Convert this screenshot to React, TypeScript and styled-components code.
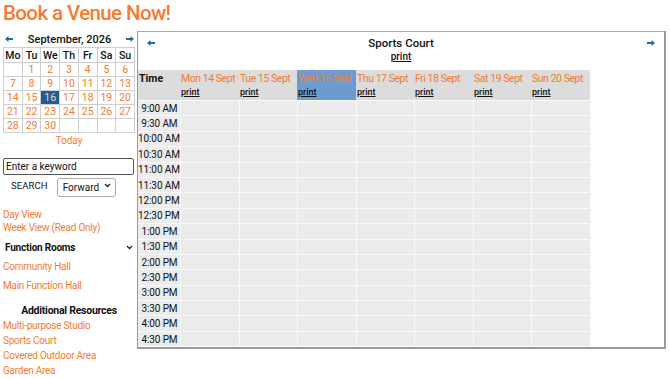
import React from "react";
import styled, { createGlobalStyle } from "styled-components";

const ORANGE = "#f47b30";
const BLUE = "#1a6db3";

const GlobalStyle = createGlobalStyle`
  body {
    margin: 0;
    font-family: Roboto, "Liberation Sans", Arial, sans-serif;
    color: #111;
    background: #fff;
  }
`;

const Page = styled.div`
  padding: 0 4px 0 3px;
`;

const Title = styled.h1`
  margin: 0;
  height: 31px;
  font-size: 20.5px;
  line-height: 27px;
  font-weight: 500;
  letter-spacing: -0.6px;
  color: ${ORANGE};
`;

const Layout = styled.div`
  display: flex;
  align-items: flex-start;
  gap: 2px;
`;

const Sidebar = styled.div`
  width: 132px;
  display: flex;
  flex-direction: column;
`;

const CalNav = styled.div`
  display: flex;
  align-items: center;
  justify-content: space-between;
  height: 16px;
  padding: 0 1px 0 2px;
  font-size: 11px;
  font-weight: 500;
`;

const CalTable = styled.table`
  border-collapse: collapse;
  width: 132px;
  table-layout: fixed;
  border: 1px solid #9a9a9a;
  font-size: 10.5px;
`;

const CalHead = styled.th`
  height: 14px;
  padding: 0;
  font-weight: 500;
  text-align: center;
  border: 1px solid #cfcfcf;
`;

const CalCell = styled.td<{ $active?: boolean }>`
  height: 13px;
  padding: 0;
  text-align: center;
  color: ${(p) => (p.$active ? "#fcd2b4" : ORANGE)};
  background: ${(p) => (p.$active ? "#1f5c9c" : "transparent")};
  border: 1px solid #cfcfcf;
`;

const Today = styled.div`
  text-align: center;
  font-size: 10px;
  color: ${ORANGE};
  height: 16px;
  line-height: 16px;
`;

const KeywordInput = styled.input`
  box-sizing: border-box;
  width: 131px;
  height: 17px;
  margin-top: 9px;
  padding: 0 2px;
  border: 1px solid #555;
  border-radius: 2px;
  font-family: inherit;
  font-size: 10px;
  color: #111;
  &::placeholder {
    color: #111;
  }
`;

const SearchRow = styled.div`
  display: flex;
  align-items: center;
  gap: 9px;
  padding-left: 8px;
  margin-top: 1px;
`;

const SearchLabel = styled.span`
  font-size: 9.5px;
  letter-spacing: 0.1px;
`;

const SelectWrap = styled.div`
  position: relative;
  width: 59px;
  height: 19px;
`;

const DirectionSelect = styled.select`
  appearance: none;
  box-sizing: border-box;
  width: 100%;
  height: 100%;
  font-family: inherit;
  font-size: 10px;
  border: 1px solid #aaa;
  border-radius: 3px;
  background: #fff;
  color: #111;
  padding: 0 0 0 5px;
`;

const SelectChevron = styled.span`
  position: absolute;
  right: 5px;
  top: 7px;
  line-height: 0;
  pointer-events: none;
`;

const ViewLinks = styled.div`
  display: flex;
  flex-direction: column;
  margin-top: 13px;
`;

const SideLink = styled.a`
  display: block;
  height: 13px;
  font-size: 10px;
  letter-spacing: -0.25px;
  color: ${ORANGE};
  text-decoration: none;
  line-height: 13px;
`;

const GroupHeader = styled.div`
  display: flex;
  align-items: center;
  justify-content: space-between;
  margin-top: 5px;
  height: 16px;
  padding: 0 2px;
  font-size: 10px;
  letter-spacing: -0.2px;
  font-weight: 700;
`;

const GroupLinks = styled.div`
  display: flex;
  flex-direction: column;
  gap: 6px;
  margin-top: 5px;
`;

const SubHeading = styled.div`
  text-align: center;
  font-size: 10.5px;
  letter-spacing: -0.25px;
  font-weight: 700;
  margin-top: 12px;
  margin-bottom: 2px;
`;

const ResourceLinks = styled.div`
  display: flex;
  flex-direction: column;
  gap: 2px;
`;

const Panel = styled.div`
  flex: 0 0 529px;
  box-sizing: border-box;
  border-style: solid;
  border-width: 1px 2px 2px 1px;
  border-color: #a8a8a8 #9a9a9a #9a9a9a #9a9a9a;
`;

const PanelHead = styled.div`
  display: grid;
  grid-template-columns: 1fr auto 1fr;
  align-items: start;
  height: 38px;
  padding: 4px 9px 0 9px;
  box-sizing: border-box;
`;

const PanelTitle = styled.div`
  text-align: center;
  font-size: 11.5px;
  font-weight: 500;
  line-height: 14px;
`;

const PrintLink = styled.a<{ $small?: boolean }>`
  display: block;
  font-size: ${(p) => (p.$small ? "9px" : "10px")};
  font-weight: 500;
  color: #111;
  text-decoration: underline;
  line-height: 12px;
  margin-top: 1px;
`;

const ArrowSlot = styled.div<{ $end?: boolean }>`
  display: flex;
  justify-content: ${(p) => (p.$end ? "flex-end" : "flex-start")};
  padding-top: 4px;
`;

const Grid = styled.table`
  border-collapse: collapse;
  table-layout: fixed;
  width: 451px;
`;

const Col = styled.col<{ $w: number }>`
  width: ${(p) => p.$w}px;
`;

const HeadCell = styled.th<{ $active?: boolean }>`
  height: 28px;
  padding: 2px 0 0 1px;
  vertical-align: top;
  text-align: left;
  background: ${(p) => (p.$active ? "#6b9bd1" : "#dcdcdc")};
  font-weight: 400;
  overflow: hidden;
`;

const DayLabel = styled.div`
  font-size: 10.5px;
  letter-spacing: -0.45px;
  color: ${ORANGE};
  line-height: 13px;
  white-space: nowrap;
`;

const TimeHead = styled.div`
  font-size: 10.5px;
  font-weight: 700;
  line-height: 13px;
`;

const TimeCell = styled.td`
  height: 14.4px;
  padding: 0 2px 0 0;
  text-align: right;
  font-size: 10px;
  letter-spacing: -0.1px;
  background: #ececec;
  border: 1px solid #fafafa;
  border-left: none;
  white-space: nowrap;
`;

const SlotCell = styled.td`
  padding: 0;
  background: #ebebeb;
  border: 1px solid #fafafa;
`;

const Arrow = ({ dir }: { dir: "left" | "right" }) => (
  <svg width="8" height="6" viewBox="0 0 8 6" style={{ transform: dir === "right" ? "scaleX(-1)" : undefined }}>
    <polygon points="0,3 3.5,0 3.5,6" fill={BLUE} />
    <rect x="3" y="2" width="5" height="2" fill={BLUE} />
  </svg>
);

const Chevron = () => (
  <svg width="7" height="5" viewBox="0 0 7 5">
    <path d="M1 1 L3.5 3.5 L6 1" stroke="#222" strokeWidth="1.3" fill="none" />
  </svg>
);

const weeks: (number | null)[][] = [
  [null, 1, 2, 3, 4, 5, 6],
  [7, 8, 9, 10, 11, 12, 13],
  [14, 15, 16, 17, 18, 19, 20],
  [21, 22, 23, 24, 25, 26, 27],
  [28, 29, 30, null, null, null, null],
];

const days = [
  "Mon 14 Sept",
  "Tue 15 Sept",
  "Wed 16 Sept",
  "Thu 17 Sept",
  "Fri 18 Sept",
  "Sat 19 Sept",
  "Sun 20 Sept",
];

const times = [
  "9:00 AM", "9:30 AM", "10:00 AM", "10:30 AM", "11:00 AM", "11:30 AM",
  "12:00 PM", "12:30 PM", "1:00 PM", "1:30 PM", "2:00 PM", "2:30 PM",
  "3:00 PM", "3:30 PM", "4:00 PM", "4:30 PM",
];

const App: React.FC = () => {
  return (
    <Page>
      <GlobalStyle />
      <Title>Book a Venue Now!</Title>
      <Layout>
        <Sidebar>
          <CalNav>
            <Arrow dir="left" />
            <span>September, 2026</span>
            <Arrow dir="right" />
          </CalNav>
          <CalTable>
            <thead>
              <tr>
                {["Mo", "Tu", "We", "Th", "Fr", "Sa", "Su"].map((d) => (
                  <CalHead key={d}>{d}</CalHead>
                ))}
              </tr>
            </thead>
            <tbody>
              {weeks.map((w, i) => (
                <tr key={i}>
                  {w.map((d, j) => (
                    <CalCell key={j} $active={d === 16}>
                      {d ?? ""}
                    </CalCell>
                  ))}
                </tr>
              ))}
            </tbody>
          </CalTable>
          <Today>Today</Today>
          <KeywordInput placeholder="Enter a keyword" />
          <SearchRow>
            <SearchLabel>SEARCH</SearchLabel>
            <SelectWrap>
              <DirectionSelect defaultValue="Forward">
                <option>Forward</option>
                <option>Backward</option>
              </DirectionSelect>
              <SelectChevron>
                <Chevron />
              </SelectChevron>
            </SelectWrap>
          </SearchRow>
          <ViewLinks>
            <SideLink>Day View</SideLink>
            <SideLink>Week View (Read Only)</SideLink>
          </ViewLinks>
          <GroupHeader>
            <span>Function Rooms</span>
            <Chevron />
          </GroupHeader>
          <GroupLinks>
            <SideLink>Community Hall</SideLink>
            <SideLink>Main Function Hall</SideLink>
          </GroupLinks>
          <SubHeading>Additional Resources</SubHeading>
          <ResourceLinks>
            <SideLink>Multi-purpose Studio</SideLink>
            <SideLink>Sports Court</SideLink>
            <SideLink>Covered Outdoor Area</SideLink>
            <SideLink>Garden Area</SideLink>
          </ResourceLinks>
        </Sidebar>
        <Panel>
          <PanelHead>
            <ArrowSlot>
              <Arrow dir="left" />
            </ArrowSlot>
            <PanelTitle>
              Sports Court
              <PrintLink>print</PrintLink>
            </PanelTitle>
            <ArrowSlot $end>
              <Arrow dir="right" />
            </ArrowSlot>
          </PanelHead>
          <Grid>
            <colgroup>
              <Col $w={42} />
              {days.map((d, i) => (
                <Col key={d} $w={i % 2 === 0 ? 59 : 58} />
              ))}
            </colgroup>
            <thead>
              <tr>
                <HeadCell>
                  <TimeHead>Time</TimeHead>
                </HeadCell>
                {days.map((d, i) => (
                  <HeadCell key={d} $active={i === 2}>
                    <DayLabel>{d}</DayLabel>
                    <PrintLink $small>print</PrintLink>
                  </HeadCell>
                ))}
              </tr>
            </thead>
            <tbody>
              {times.map((t) => (
                <tr key={t}>
                  <TimeCell>{t}</TimeCell>
                  {days.map((d) => (
                    <SlotCell key={d} />
                  ))}
                </tr>
              ))}
            </tbody>
          </Grid>
        </Panel>
      </Layout>
    </Page>
  );
};

export default App;
